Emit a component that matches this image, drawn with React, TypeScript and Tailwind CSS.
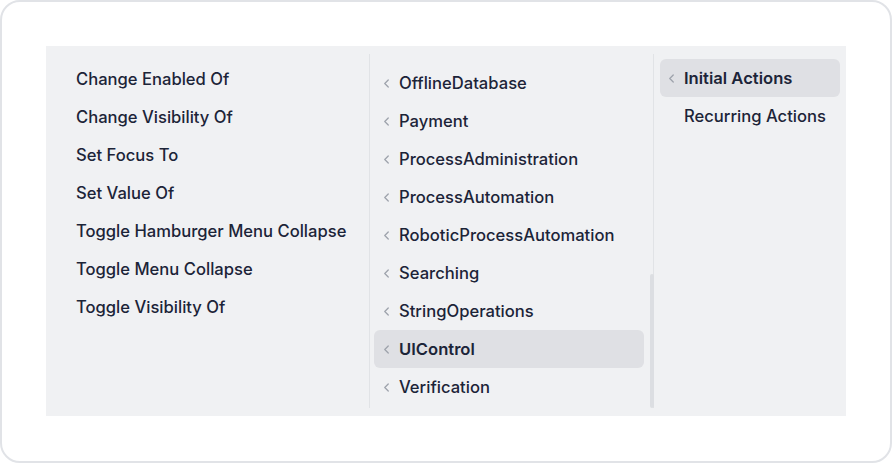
import React from 'react';

const leftItems = [
    'Change Enabled Of',
    'Change Visibility Of',
    'Set Focus To',
    'Set Value Of',
    'Toggle Hamburger Menu Collapse',
    'Toggle Menu Collapse',
    'Toggle Visibility Of',
];

const middleItems = [
    'OfflineDatabase',
    'Payment',
    'ProcessAdministration',
    'ProcessAutomation',
    'RoboticProcessAutomation',
    'Searching',
    'StringOperations',
    'UIControl',
    'Verification',
];

const Chevron: React.FC = () => (
    <svg viewBox="0 0 8 12" className="w-[7px] h-[11px] flex-shrink-0 text-[#9ea3ac]" fill="none" stroke="currentColor" strokeWidth="1.5" strokeLinecap="round" strokeLinejoin="round">
        <path d="M6 2 2 6l4 4" />
    </svg>
);

const App: React.FC = () => {
    const selectedGroup = 'UIControl';

    return (
        <div className="w-[892px] h-[463px] bg-white" style={{ fontFamily: 'Inter, "Noto Sans", sans-serif' }}>
            <div className="w-full h-full border-2 border-[#e1e3e7] rounded-[20px] p-[44px]">
                <div className="flex h-[370px] w-[800px] bg-[#f0f1f3] py-2 text-[16.6px] font-medium text-[#1c2438]">
                    {/* actions */}
                    <ul className="w-[324px] border-r border-[#e1e3e6] pt-[6px]">
                        {leftItems.map((item) => (
                            <li key={item} className="h-[38px] flex items-center pl-[30px]">
                                {item}
                            </li>
                        ))}
                    </ul>

                    {/* groups */}
                    <div className="relative w-[284px] border-r border-[#e1e3e6]">
                        <ul className="pt-[10px] pl-1 pr-[9px]">
                            {middleItems.map((item) => (
                                <li
                                    key={item}
                                    className={`h-[38px] flex items-center gap-[9px] pl-[9px] pt-[1px] rounded-md ${item === selectedGroup ? 'bg-[#dfe0e4] font-semibold' : ''}`}
                                >
                                    <Chevron />
                                    {item}
                                </li>
                            ))}
                        </ul>
                        <div className="absolute right-[-1px] top-[220px] bottom-0 w-[4px] rounded-full bg-[#dcdee2]" />
                    </div>

                    {/* triggers */}
                    <ul className="flex-1 pt-[5px] px-[6px]">
                        <li className="h-[38px] flex items-center gap-[9px] pl-[8px] pt-[1px] rounded-md bg-[#dfe0e4] font-semibold">
                            <Chevron />
                            Initial Actions
                        </li>
                        <li className="h-[38px] flex items-center pl-[24px] pt-[1px]">Recurring Actions</li>
                    </ul>
                </div>
            </div>
        </div>
    );
};

export default App;
